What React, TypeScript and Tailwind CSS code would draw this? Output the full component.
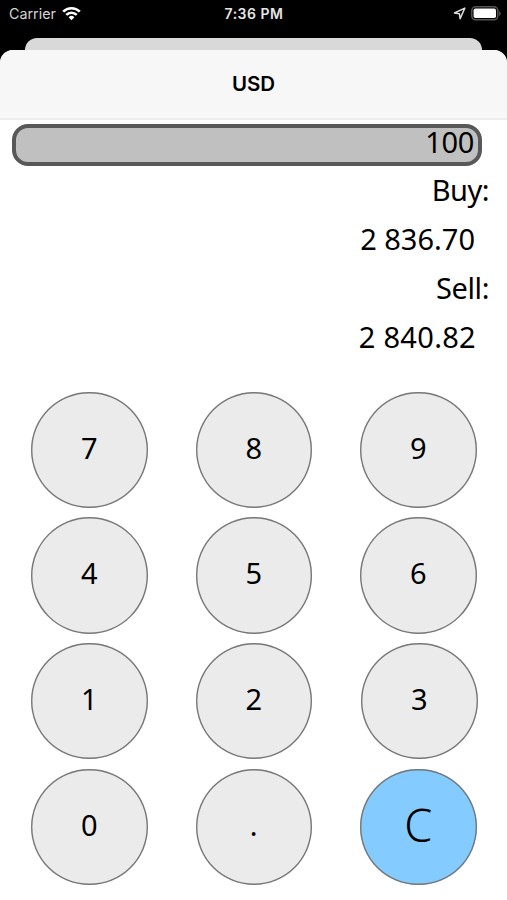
import React, { useState } from 'react';

interface Rate {
  code: string;
  buy: number;
  sell: number;
}

interface KeyProps {
  label: string;
  onPress: (label: string) => void;
}

const RATE: Rate = { code: 'USD', buy: 28.367, sell: 28.4082 };

const KEYS = ['7', '8', '9', '4', '5', '6', '1', '2', '3', '0', '.', 'C'];

// 2836.7 -> "2 836.70"
const formatAmount = (value: number) =>
  value.toFixed(2).replace(/\B(?=(\d{3})+(?!\d))/g, ' ');

const StatusBar: React.FC = () => (
  <div className="grid h-[27px] grid-cols-3 items-center pl-[9px] pr-[6px] text-white">
    <div className="flex items-center gap-[6px]">
      <span className="pt-px text-[14.3px] leading-none text-[#d4d4d4]">Carrier</span>
      <svg width="19" height="15" viewBox="0 0 19 15" fill="none" stroke="#fff" strokeWidth="2.6">
        <path d="M1.2 5.6a11.8 11.8 0 0 1 16.6 0" />
        <path d="M4.3 8.9a7.4 7.4 0 0 1 10.4 0" />
        <path d="M9.5 14.2l-2.9-3a4.2 4.2 0 0 1 5.8 0z" fill="#fff" stroke="none" />
      </svg>
    </div>
    <span className="pr-[2px] pt-px text-center text-[14px] font-semibold leading-none tracking-[0.5px] text-[#e6e6e6]">
      7:36 PM
    </span>
    <div className="flex items-center justify-end gap-[5px]">
      <svg width="13" height="13" viewBox="0 0 13 13" fill="none" stroke="#ddd" strokeWidth="1.5" strokeLinejoin="round">
        <path d="M11.8 1.1L1.4 6l5 .7.7 5z" />
      </svg>
      <svg width="30" height="15" viewBox="0 0 30 15">
        <rect x="0.8" y="0.8" width="26" height="13" rx="3.8" fill="none" stroke="#555" strokeWidth="1.5" />
        <rect x="2.6" y="2.5" width="22.4" height="9.6" rx="1.8" fill="#fff" />
        <path d="M28.2 5v5c1-.4 1.5-1.3 1.5-2.500s-.5-2.100-1.500-2.500z" fill="#555" />
      </svg>
    </div>
  </div>
);

const Key: React.FC<KeyProps> = ({ label, onPress }) => {
  const isClear = label === 'C';
  return (
    <button
      onClick={() => onPress(label)}
      className={`flex h-[116.5px] w-[116.5px] items-center justify-center rounded-full pb-[5px] leading-none shadow-[inset_0_0_0_1.4px_#777] ${
        isClear ? 'bg-[#84ccff] text-[45px] font-light' : 'bg-[#ebebeb] text-[29px]'
      } ${label === '3' ? 'ml-px' : ''}`}
    >
      {label}
    </button>
  );
};

const App: React.FC = () => {
  const [amount, setAmount] = useState('100');

  const handlePress = (key: string) => {
    if (key === 'C') {
      setAmount('0');
      return;
    }
    if (key === '.' && amount.includes('.')) return;
    setAmount(amount === '0' && key !== '.' ? key : amount + key);
  };

  const value = Number(amount);

  return (
    <div className="flex h-[900px] w-[507px] flex-col overflow-hidden bg-black font-['Inter',sans-serif]">
      <StatusBar />

      {/* Card of the screen behind the sheet */}
      <div className="mx-[25px] mt-[11px] h-[12px] shrink-0 rounded-t-[12px] bg-[#d9d9d9]" />

      {/* Modal sheet */}
      <div className="flex flex-1 flex-col overflow-hidden rounded-t-[13px] bg-white">
        <header className="flex h-[70px] shrink-0 items-center justify-center border-b-2 border-[#eee] bg-[#f7f7f7]">
          <h1 className="text-[20.5px] font-semibold leading-none text-black">{RATE.code}</h1>
        </header>

        <main className="font-['Noto_Sans','Open_Sans',sans-serif] text-[29px] text-black">
          <div className="ml-[12px] mt-[4px] flex h-[42px] w-[470px] items-center justify-end rounded-[16px] border-4 border-[#585858] bg-[#c0c0c0] pb-[7px] pr-[4px] leading-none tracking-[-0.3px]">
            {amount}
          </div>

          <div className="-mt-px flex flex-col text-right leading-[49px]">
            <div className="pr-[18px] tracking-[-0.5px]">Buy:</div>
            <div className="pr-[32px]">{formatAmount(value * RATE.buy)}</div>
            <div className="pr-[18px] tracking-[-0.4px]">Sell:</div>
            <div className="pr-[31px] tracking-[0.3px]">{formatAmount(value * RATE.sell)}</div>
          </div>

          <div className="ml-[31px] mt-[30.5px] grid w-[445.5px] grid-cols-[116.5px_116.5px_116.5px] justify-between gap-y-[9.2px]">
            {KEYS.map((k) => (
              <Key key={k} label={k} onPress={handlePress} />
            ))}
          </div>
        </main>
      </div>
    </div>
  );
};

export default App;
